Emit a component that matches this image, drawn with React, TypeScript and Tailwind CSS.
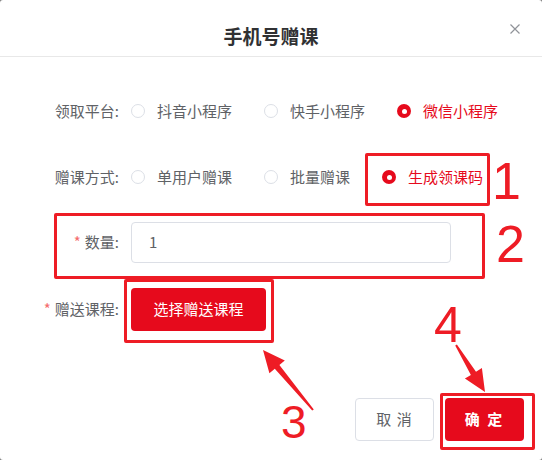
import React from "react";

type Option = { label: string; checked?: boolean };

const platforms: Option[] = [
  { label: "抖音小程序" },
  { label: "快手小程序" },
  { label: "微信小程序", checked: true },
];

const modes: Option[] = [
  { label: "单用户赠课" },
  { label: "批量赠课" },
  { label: "生成领课码", checked: true },
];

function Radio({ checked }: { checked?: boolean }) {
  return checked ? (
    <span className="flex size-[14px] shrink-0 items-center justify-center rounded-full bg-[#e60a1c]">
      <span className="size-[5px] rounded-full bg-white" />
    </span>
  ) : (
    <span className="size-[14px] shrink-0 rounded-full border border-[#dcdfe6] bg-white" />
  );
}

function RadioGroup({ options }: { options: Option[] }) {
  return (
    <div className="flex items-center">
      {options.map((o) => (
        <label key={o.label} className="mr-[32px] flex items-center">
          <Radio checked={o.checked} />
          <span className={o.checked ? "ml-[12px] text-[#e60a1c]" : "ml-[12px] text-[#606266]"}>{o.label}</span>
        </label>
      ))}
    </div>
  );
}

function Label({ text, required }: { text: string; required?: boolean }) {
  return (
    <div className="w-[131px] shrink-0 pr-[12px] text-right text-[#606266]">
      {required && <span className="mr-[4px] text-[#f56c6c]">*</span>}
      {text}
    </div>
  );
}

export default function App() {
  return (
    <div className="h-[460px] w-[542px] bg-[#7d7d7d] font-['Noto_Sans_CJK_SC',sans-serif] text-[15px]">
      <div className="relative flex h-full w-full flex-col rounded-[3px] bg-white">
        {/* header */}
        <div className="relative flex h-[57px] items-center justify-center border-b border-[#e8e8e8] pt-[14px]">
          <h2 className="text-[19px] font-bold leading-none text-[#303133]">手机号赠课</h2>
          <svg className="absolute right-[22px] top-[24px]" width="10" height="10" viewBox="0 0 10 10">
            <path d="M0.5 0.5L9.5 9.5M9.5 0.5L0.5 9.5" stroke="#909399" strokeWidth="1.2" />
          </svg>
        </div>

        {/* form */}
        <div className="mt-[34px] flex h-10 items-center">
          <Label text="领取平台:" />
          <RadioGroup options={platforms} />
        </div>
        <div className="mt-[26px] flex h-10 items-center">
          <Label text="赠课方式:" />
          <RadioGroup options={modes} />
        </div>
        <div className="mt-[25px] flex h-[41px] items-center">
          <Label text="数量:" required />
          <div className="flex h-full w-[320px] items-center rounded-[4px] border border-[#dcdfe6] pl-[17px] text-[#606266]">
            1
          </div>
        </div>
        <div className="mt-[25px] flex h-[43px] items-center">
          <Label text="赠送课程:" required />
          <button className="h-full w-[135px] rounded-[4px] bg-[#e60a1c] text-white">选择赠送课程</button>
        </div>

        {/* footer */}
        <div className="mt-[67px] flex justify-end gap-[11px] pr-[18px]">
          <button className="h-[43px] w-[79px] rounded-[4px] border border-[#dcdfe6] bg-white tracking-[1px] text-[#606266]">
            取 消
          </button>
          <button className="h-[43px] w-[79px] rounded-[4px] bg-[#e60a1c] font-bold tracking-[2px] text-white">
            确 定
          </button>
        </div>

        {/* annotations */}
        <div className="pointer-events-none absolute left-[365px] top-[153px] h-[53px] w-[125px] rounded-[2px] border-[3px] border-[#ee1c25]" />
        <div className="pointer-events-none absolute left-[54px] top-[213px] h-[66px] w-[431px] rounded-[2px] border-[3px] border-[#ee1c25]" />
        <div className="pointer-events-none absolute left-[124px] top-[279px] h-[64px] w-[150px] rounded-[2px] border-[3px] border-[#ee1c25]" />
        <div className="pointer-events-none absolute left-[440px] top-[393px] h-[57px] w-[95px] rounded-[2px] border-[3px] border-[#ee1c25]" />

        <span className="absolute left-[492px] top-[155px] font-['Liberation_Sans',sans-serif] text-[52px] leading-none text-[#ee1c25]">1</span>
        <span className="absolute left-[496px] top-[218px] font-['Liberation_Sans',sans-serif] text-[52px] leading-none text-[#ee1c25]">2</span>
        <span className="absolute left-[281px] top-[399px] font-['Liberation_Sans',sans-serif] text-[46px] leading-none text-[#ee1c25]">3</span>
        <span className="absolute left-[434px] top-[300px] font-['Liberation_Sans',sans-serif] text-[50px] leading-none text-[#ee1c25]">4</span>

        <svg className="pointer-events-none absolute left-0 top-0" width="542" height="460" viewBox="0 0 542 460">
          <polygon
            fill="#ee1c25"
            points="263,350 284.8,360.5 279.4,365 313.8,409.4 312.2,410.6 274.8,368.8 269.4,373.3"
          />
          <polygon
            fill="#ee1c25"
            points="485,392 464.9,378.5 470.9,374.9 455.2,345.5 456.9,344.5 476,371.7 481.9,368.1"
          />
        </svg>
      </div>
    </div>
  );
}
